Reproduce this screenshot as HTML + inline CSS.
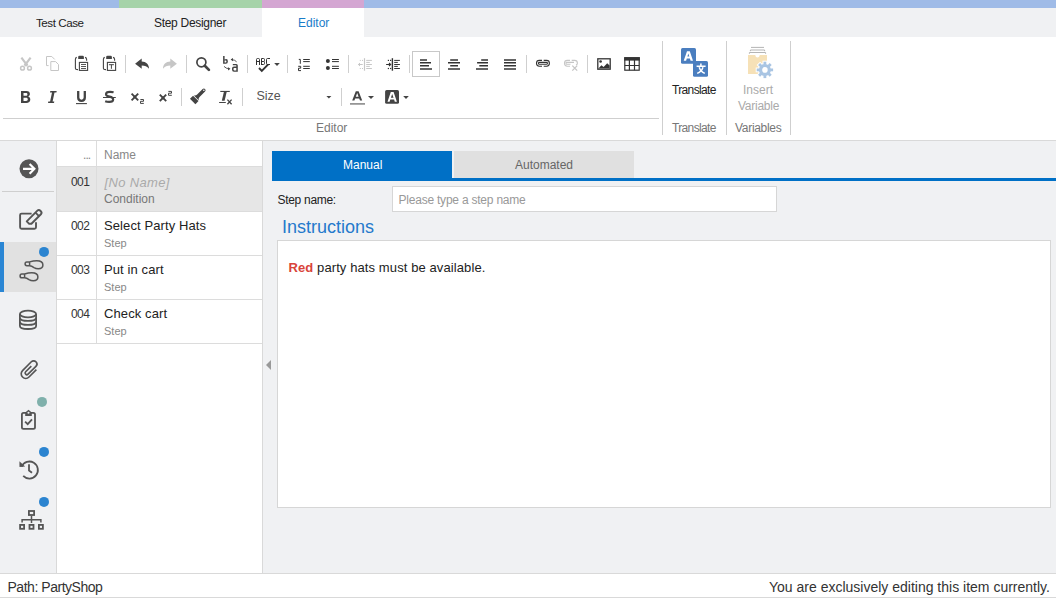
<!DOCTYPE html>
<html><head><meta charset="utf-8">
<style>
*{box-sizing:border-box;margin:0;padding:0}
html,body{width:1056px;height:599px;overflow:hidden;background:#fff;font-family:"Liberation Sans",sans-serif;color:#333}
.a{position:absolute}
.t{position:absolute;white-space:nowrap;line-height:1}
svg{position:absolute;overflow:visible}
</style></head><body>
<!-- color strip -->
<div class="a" style="left:0;top:0;width:119px;height:8px;background:#9fbbe7"></div>
<div class="a" style="left:119px;top:0;width:143px;height:8px;background:#a6d3a9"></div>
<div class="a" style="left:262px;top:0;width:102px;height:8px;background:#d4a6d2"></div>
<div class="a" style="left:364px;top:0;width:692px;height:8px;background:#9fbbe7"></div>
<!-- tab row -->
<div class="a" style="left:0;top:8px;width:1056px;height:29px;background:#f0f1f3"></div>
<div class="a" style="left:262px;top:8px;width:102px;height:29px;background:#fff"></div>
<div id="tTC" class="t" style="left:36px;top:16.8px;font-size:11.6px;letter-spacing:-0.45px;color:#222">Test Case</div>
<div id="tSD" class="t" style="left:154px;top:17px;font-size:12px;letter-spacing:-0.3px;color:#222">Step Designer</div>
<div id="tED" class="t" style="left:298px;top:16.5px;font-size:12px;color:#1a7cc9">Editor</div>

<svg style="left:0;top:0" width="1056" height="140" viewBox="0 0 1056 140">
<g fill="none" stroke="#cfcfcf" stroke-width="1">
<path d="M125.5 55V73M186.5 55V73M247.5 55V73M287.5 55V73M348.5 55V73M409.5 55V73M526.5 55V73M587.5 55V73"/>
<path d="M181.5 88V106M242.5 88V106M341.5 88V106"/>
<path d="M3 118.5H659"/>
<path d="M662.5 41V135M726.5 41V135M790.5 41V135"/>
</g>
<!-- cut -->
<g stroke="#c6c6c6" fill="none">
<path d="M21.4 57.6L27.4 65.6M30.6 57.6L24.6 65.6" stroke-width="2.2"/>
<path d="M26 61.6L28.2 64.6L26 66.8L23.8 64.6Z" fill="#c6c6c6" stroke="none"/>
<circle cx="22.5" cy="68.2" r="1.9" stroke-width="1.5"/>
<circle cx="29.5" cy="68.2" r="1.9" stroke-width="1.5"/>
</g>
<!-- copy -->
<g stroke="#c6c6c6" fill="none" stroke-width="1">
<path d="M48.6 65.6H46.5V56.5H51.8L54.7 59.4"/>
<path d="M50.8 61.6H55.6L58.5 64.5V70.5H50.8Z"/>
</g>
<!-- paste -->
<g fill="none" stroke="#444" stroke-width="1.1">
<path d="M76.8 57.4Q75.4 57.6 75.4 59.2V68.2Q75.4 69.6 78 69.6"/>
<path d="M85 57.4Q86.6 57.6 86.6 59.2V60.8"/>
<rect x="79.4" y="62.4" width="8.2" height="8" />
<path d="M81 64.5H86M81 66.5H86M81 68.5H86" stroke-width="0.9"/>
<path d="M104.8 57.4Q103.4 57.6 103.4 59.2V68.2Q103.4 69.6 106 69.6"/>
<path d="M113 57.4Q114.6 57.6 114.6 59.2V60.8"/>
<rect x="107.4" y="62.4" width="8.2" height="8" />
<path d="M108.9 64.7H113.9M111.4 64.7V68.8" stroke-width="1"/>
</g>
<g fill="#444">
<path d="M78.2 58.9V57Q78.2 55.7 79.5 55.7H82.6Q83.9 55.7 83.9 57V58.9Z"/>
<path d="M106.2 58.9V57Q106.2 55.7 107.5 55.7H110.6Q111.9 55.7 111.9 57V58.9Z"/>
</g>
<!-- undo / redo -->
<path fill="#444" d="M135.1 63.7L141.7 58.6V61.6C146.2 61.8 148.9 64.2 149 68.8C147.2 66.3 145 65.6 141.7 65.6V68.8Z"/>
<path fill="#c6c6c6" d="M176.9 63.7L170.3 58.6V61.6C165.8 61.8 163.1 64.2 163 68.8C164.8 66.3 167 65.6 170.3 65.6V68.8Z"/>
<!-- find -->
<g fill="none" stroke="#444">
<circle cx="201.4" cy="62.3" r="4.5" stroke-width="1.7"/>
<path d="M204.8 65.8L208.9 69.9" stroke-width="2.7" stroke-linecap="round"/>
</g>
<!-- replace -->
<g fill="#444">
<path fill-rule="evenodd" d="M223.1 56H224.6V59.6Q225.3 59.1 226.2 59.1Q227.9 59.1 227.9 61.4Q227.9 63.8 225.8 63.8H223.1ZM224.6 60.5V62.6H225.7Q226.4 62.6 226.4 61.5Q226.4 60.5 225.7 60.5Z"/>
<path fill-rule="evenodd" d="M232.8 64H236.3Q237.8 64 237.8 65.5V71.7H234Q232 71.7 232 69.5V68.4Q232 66.6 234 66.6H236.3V65.6Q236.3 65.3 236 65.3H232.8ZM234.2 67.9Q233.5 67.9 233.5 68.6V69.6Q233.5 70.4 234.2 70.4H236.3V67.9Z"/>
</g>
<g fill="none" stroke="#444" stroke-width="0.9">
<path d="M236.6 61.8Q235 59.8 231.6 59.6"/>
<path d="M224 66.4Q225.8 68.6 229.4 68.8"/>
</g>
<g fill="#444">
<path d="M230.6 59.6L233 58V61.2Z"/>
<path d="M230.4 68.8L228 67.2V70.4Z"/>
</g>
<!-- spell -->
<g fill="none" stroke="#333" stroke-width="1">
<path d="M256.5 65V59.5Q256.5 58.5 257.5 58.5H258.5Q259.5 58.5 259.5 59.5V65M256.5 61.5H259.5"/>
<path d="M261.5 65V58.5H263.5Q264.5 58.5 264.5 59.5V60.5Q264.5 61.5 263.5 61.5H261.5M263.5 61.5Q264.5 61.5 264.5 62.5V63.5Q264.5 64.5 263.5 64.5H261.5"/>
<path d="M270 58.5H267.5Q266.5 58.5 266.5 59.5V63.5Q266.5 64.5 267.5 64.5H270"/>
</g>
<path d="M259 68L261.8 70.9L268.2 64.4" fill="none" stroke="#333" stroke-width="1.9"/>
<path d="M274.2 63H279.8L277 65.9Z" fill="#444"/>
<!-- numbered list -->
<g fill="none" stroke="#333" stroke-width="1">
<path d="M303.2 59.5H309.8M303.2 61.6H309.8M303.2 66.3H309.8M303.2 68.5H309.8"/>
<path d="M298.8 59.4H300.3V63.8"/>
<path d="M298.2 66.3H300.7V68.2H298.5V70.6H301"/>
<path d="M332 59.5H338.9M332 61.6H338.9M332 66.3H338.9M332 68.5H338.9"/>
</g>
<circle cx="327.9" cy="61" r="2" fill="#333"/>
<circle cx="327.9" cy="67.9" r="2" fill="#333"/>
<!-- outdent -->
<g fill="none" stroke="#c6c6c6" stroke-width="1">
<path d="M364.5 58.2V70.7" stroke-width="1.2"/>
<path d="M366.2 60.4H371.9M366.2 62.4H369.8M366.2 64.5H371.9M366.2 66.4H369.8M366.2 68.5H371.9"/>
<path d="M358.4 64.5H362.7M360 63L358.4 64.5L360 66"/>
</g>
<g fill="#c6c6c6"><rect x="359.8" y="59.9" width="1" height="1"/><rect x="362" y="59.9" width="1" height="1"/><rect x="359.8" y="68" width="1" height="1"/><rect x="362" y="68" width="1" height="1"/></g>
<!-- indent -->
<g fill="none" stroke="#333" stroke-width="1">
<path d="M392.4 58.2V70.7" stroke-width="1.4"/>
<path d="M394.2 60.4H399.9M394.2 62.4H397.8M394.2 64.5H399.9M394.2 66.4H397.8M394.2 68.5H399.9"/>
<path d="M386.1 64.5H390.4M389 63L390.6 64.5L389 66" stroke-width="1.2"/>
</g>
<g fill="#333"><rect x="387.8" y="59.8" width="1.2" height="1.2"/><rect x="390" y="59.8" width="1.2" height="1.2"/><rect x="387.8" y="67.9" width="1.2" height="1.2"/><rect x="390" y="67.9" width="1.2" height="1.2"/></g>
<!-- align -->
<rect x="412.5" y="51.5" width="27" height="25" fill="none" stroke="#c8c8c8" stroke-width="1"/>
<g fill="none" stroke="#333" stroke-width="1.5">
<path d="M420 59.9H427M420 62.8H431M420 65.8H429M420 68.9H432"/>
<path d="M450.2 59.9H458M448 62.8H460M450.2 65.8H458M448 68.9H460"/>
<path d="M481.2 59.9H488M477.1 62.8H488M479.3 65.8H488M476 68.9H488"/>
<path d="M504 59.9H516M504 62.8H516M504 65.8H516M504 68.9H516"/>
</g>
<!-- link -->
<g fill="none" stroke="#333" stroke-width="1.1">
<path d="M542 60.4H539.3Q536.5 60.4 536.5 63.3Q536.5 66.2 539.3 66.2H542"/>
<path d="M543.7 60.4H546.6Q549.4 60.4 549.4 63.3Q549.4 66.2 546.6 66.2H543.7"/>
<rect x="538.5" y="62.4" width="8.9" height="1.9" rx="0.9"/>
</g>
<g fill="none" stroke="#c6c6c6" stroke-width="1.1">
<path d="M570 60.4H567.3Q564.5 60.4 564.5 63.3Q564.5 66.2 567.3 66.2H570"/>
<path d="M571.7 60.4H574.6Q577.4 60.4 577.4 63.3Q577.4 64.6 576 65"/>
<path d="M570.5 64.3H566.5Q566 64.3 566 63.3Q566 62.4 566.5 62.4H574"/>
<path d="M572.3 65.6L577.2 70.6M577.2 65.6L572.3 70.6" stroke-width="1.3"/>
</g>
<!-- image -->
<rect x="597.8" y="58.8" width="12.4" height="10.4" fill="none" stroke="#333" stroke-width="1.3"/>
<circle cx="600.6" cy="61.5" r="1.3" fill="#333"/>
<path d="M598.5 68.6L601.4 65.2L603.6 67L607.2 63.3L609.6 65.6V68.6Z" fill="#333"/>
<!-- table -->
<rect x="624.8" y="57.8" width="14.4" height="12.4" fill="none" stroke="#333" stroke-width="1.2"/>
<rect x="624.2" y="57.2" width="15.6" height="3.4" fill="#333"/>
<path d="M629.4 60V70.2M634.5 60V70.2M624.8 65.5H639.2" stroke="#333" stroke-width="1.2"/>

<!-- row 2 -->
<path fill="#444" fill-rule="evenodd" d="M21 91H26.4C28.8 91 29.9 92.2 29.9 93.9C29.9 95.1 29.2 96 28.1 96.5C29.5 96.9 30.3 98 30.3 99.5C30.3 101.7 28.8 103 26.3 103H21ZM23.5 93V95.8H25.9C26.9 95.8 27.4 95.2 27.4 94.4C27.4 93.5 26.9 93 25.9 93ZM23.5 97.7V101H26.1C27.2 101 27.8 100.4 27.8 99.3C27.8 98.3 27.2 97.7 26.1 97.7Z"/>
<path fill="#444" d="M50.3 91H56.7L56.4 92.4H54.5L52.6 101.6H54.3L54 103H48L48.3 101.6H50.1L52 92.4H50Z"/>
<path fill="none" stroke="#444" stroke-width="2.3" d="M78.2 90.9V97.6Q78.2 100.9 81.5 100.9Q84.8 100.9 84.8 97.6V90.9"/>
<path stroke="#444" stroke-width="1.1" d="M76 103.6H86.9"/>
<path fill="none" stroke="#444" stroke-width="2.1" d="M113.6 92.4Q112.4 91.9 110 91.9Q106 91.9 106 94.2Q106 96 109.6 96.6Q113.2 97.3 113.2 99.4Q113.2 101.9 109.2 101.9Q106.8 101.9 105.2 101.2"/>
<path stroke="#444" stroke-width="1" d="M103 97.5H115.8"/>
<g stroke="#444" stroke-width="1.9">
<path d="M131.6 93.6L138.2 100.3M138.2 93.6L131.6 100.3"/>
<path d="M159.8 94.6L166.2 101.2M166.2 94.6L159.8 101.2"/>
</g>
<rect x="133.6" y="95.6" width="2.6" height="2.6" fill="#444"/>
<rect x="161.7" y="96.6" width="2.6" height="2.6" fill="#444"/>
<g fill="none" stroke="#444" stroke-width="1">
<path d="M140.4 99.5H143.5V101.3H140.5V103.4H143.8"/>
<path d="M168.4 91.4H171.5V93.2H168.5V95.3H171.8"/>
</g>
<!-- brush -->
<g transform="translate(198.9 95.25) rotate(45)" fill="#444">
<rect x="-3.85" y="4.4" width="7.7" height="4.4"/>
<path d="M-3.4 3.7H3.4Q1.7 2.6 1.7 0.8V-7A1.7 1.7 0 0 0 -1.7 -7V0.8Q-1.7 2.6 -3.4 3.7Z"/>
<circle cx="0" cy="-7" r="0.75" fill="#fff"/>
</g>
<!-- Tx -->
<g fill="#444">
<path d="M220.3 90.9H229.8V92H220.3Z"/>
<path d="M224 91.5H226.8L224.6 100.8H221.8Z"/>
<path d="M219.1 102H225.8V103H219.1Z"/>
</g>
<path d="M227.4 99.6L231.6 104.2M231.6 99.6L227.4 104.2" stroke="#444" stroke-width="1.3"/>
<!-- size dropdown arrow -->
<path d="M326.4 96H331.4L328.9 98.6Z" fill="#444"/>
<!-- font color -->
<path fill="#444" fill-rule="evenodd" d="M355.8 91.2H358.6L362.2 100.6H360L359.2 98.4H355.2L354.4 100.6H352.2ZM355.8 96.7H358.6L357.2 92.9Z"/>
<rect x="350" y="103.1" width="15" height="1.6" fill="#8a8a8a"/>
<path d="M368 96H374L371 98.9Z" fill="#444"/>
<rect x="385.1" y="90" width="13.9" height="13.8" rx="1.6" fill="#444"/>
<path fill="#fff" fill-rule="evenodd" d="M390.8 92.1H393.6L396.9 101.7H394.8L394.1 99.5H390.3L389.6 101.7H387.5ZM390.9 97.8H393.5L392.2 94Z"/>
<path d="M403.2 96H408.8L406 98.9Z" fill="#444"/>
</svg>

<div id="tSize" class="t" style="left:256.5px;top:90px;font-size:12.5px;color:#555">Size</div>
<div id="gEd" class="t" style="left:316px;top:122px;font-size:12px;color:#777">Editor</div>
<div id="gTr" class="t" style="left:672px;top:122px;font-size:12px;letter-spacing:-0.65px;color:#777">Translate</div>
<div id="gVa" class="t" style="left:735px;top:122px;font-size:12px;letter-spacing:-0.3px;color:#777">Variables</div>
<div id="bTr" class="t" style="left:672px;top:84px;font-size:12px;letter-spacing:-0.65px;color:#222">Translate</div>
<div id="bIn" class="t" style="left:743px;top:84px;font-size:12px;color:#aaa">Insert</div>
<div id="bVa" class="t" style="left:738px;top:100px;font-size:12px;letter-spacing:-0.25px;color:#aaa">Variable</div>

<!-- toolbar bottom -->
<div class="a" style="left:0;top:140px;width:1056px;height:1px;background:#d9d9d9"></div>

<!-- sidebar -->
<div class="a" style="left:0;top:141px;width:56px;height:432px;background:#f0f1f3"></div>
<div class="a" style="left:56px;top:141px;width:1px;height:432px;background:#d9d9d9"></div>
<div class="a" style="left:0;top:242px;width:56px;height:50px;background:#e1e1e1"></div>
<div class="a" style="left:0;top:242px;width:4px;height:50px;background:#2a86d4"></div>
<div class="a" style="left:2px;top:191px;width:52px;height:1px;background:#cfcfcf"></div>

<!-- list -->
<div class="a" style="left:57px;top:141px;width:205px;height:432px;background:#fff"></div>
<div class="a" style="left:262px;top:141px;width:1px;height:432px;background:#d9d9d9"></div>
<div class="a" style="left:57px;top:167px;width:205px;height:44px;background:#e6e6e6"></div>
<div class="a" style="left:57px;top:166px;width:205px;height:1px;background:#dcdcdc"></div>
<div class="a" style="left:57px;top:211px;width:205px;height:1px;background:#dcdcdc"></div>
<div class="a" style="left:57px;top:255px;width:205px;height:1px;background:#dcdcdc"></div>
<div class="a" style="left:57px;top:299px;width:205px;height:1px;background:#dcdcdc"></div>
<div class="a" style="left:57px;top:343px;width:205px;height:1px;background:#dcdcdc"></div>
<div class="a" style="left:96px;top:141px;width:1px;height:202px;background:#dcdcdc"></div>

<div id="lDots" class="t" style="left:83px;top:149px;font-size:12px;letter-spacing:-0.9px;color:#888">...</div>
<div id="lName" class="t" style="left:104px;top:148.5px;font-size:12px;color:#888">Name</div>
<div id="n1" class="t" style="letter-spacing:-0.6px;left:71px;top:176px;font-size:12px;color:#333">001</div>
<div id="n2" class="t" style="letter-spacing:-0.6px;left:71px;top:220px;font-size:12px;color:#333">002</div>
<div id="n3" class="t" style="letter-spacing:-0.6px;left:71px;top:264px;font-size:12px;color:#333">003</div>
<div id="n4" class="t" style="letter-spacing:-0.6px;left:71px;top:308px;font-size:12px;color:#333">004</div>
<div id="r1a" class="t" style="left:104.5px;top:176px;font-size:13px;letter-spacing:0.35px;color:#aaa;font-style:italic">[No Name]</div>
<div id="r1b" class="t" style="left:104px;top:193px;font-size:12px;color:#777">Condition</div>
<div id="r2a" class="t" style="left:104px;top:219px;font-size:13px;letter-spacing:0.1px;color:#222">Select Party Hats</div>
<div id="r2b" class="t" style="left:104px;top:238px;font-size:11px;color:#888">Step</div>
<div id="r3a" class="t" style="left:104px;top:263px;font-size:13px;letter-spacing:0.1px;color:#222">Put in cart</div>
<div id="r3b" class="t" style="left:104px;top:282px;font-size:11px;color:#888">Step</div>
<div id="r4a" class="t" style="left:104px;top:307px;font-size:13px;letter-spacing:0.1px;color:#222">Check cart</div>
<div id="r4b" class="t" style="left:104px;top:326px;font-size:11px;color:#888">Step</div>

<!-- main -->
<div class="a" style="left:263px;top:141px;width:793px;height:432px;background:#f0f1f3"></div>
<div class="a" style="left:272px;top:151px;width:180px;height:27px;background:#0070c6"></div>
<div class="a" style="left:454px;top:151px;width:180px;height:27px;background:#e0e0e0"></div>
<div class="a" style="left:272px;top:178px;width:784px;height:3px;background:#0070c6"></div>
<div id="mMan" class="t" style="left:343px;top:159px;font-size:12px;color:#fff">Manual</div>
<div id="mAut" class="t" style="left:515px;top:159px;font-size:12px;color:#666">Automated</div>
<div id="mSN" class="t" style="left:277.5px;top:194px;font-size:12px;letter-spacing:-0.3px;color:#222">Step name:</div>
<div class="a" style="left:392px;top:186px;width:385px;height:26px;background:#fff;border:1px solid #d6d6d6"></div>
<div id="mPH" class="t" style="left:398.5px;top:194px;font-size:12px;letter-spacing:-0.22px;color:#999">Please type a step name</div>
<div id="mIns" class="t" style="left:282px;top:218px;font-size:18px;color:#2479cc">Instructions</div>
<div class="a" style="left:277px;top:240px;width:774px;height:268px;background:#fff;border:1px solid #d6d6d6"></div>
<div id="mRed" class="t" style="left:288.5px;top:261px;font-size:13px;letter-spacing:0.1px;color:#222"><b style="color:#d9443a">Red</b> party hats must be available.</div>
<svg style="left:266px;top:360px" width="6" height="10"><path d="M5 0 L0 5 L5 10 Z" fill="#999"/></svg>

<!-- status bar -->
<div class="a" style="left:0;top:573px;width:1056px;height:1px;background:#d9d9d9"></div>
<div class="a" style="left:0;top:597px;width:1056px;height:1px;background:#d9d9d9"></div>
<div id="sPath" class="t" style="left:7.5px;top:580px;font-size:14px;letter-spacing:-0.47px;color:#333">Path: PartyShop</div>
<div id="sEx" class="t" style="left:769px;top:580px;font-size:14px;color:#333">You are exclusively editing this item currently.</div>

<svg style="left:0;top:0" width="1056" height="599" viewBox="0 0 1056 599">
<!-- translate icon -->
<rect x="681" y="48" width="15" height="15.7" rx="1.5" fill="#4a7ebf"/>
<rect x="693" y="61" width="15" height="15.7" rx="1.5" fill="#4a7ebf"/>
<path fill="#fff" fill-rule="evenodd" d="M687 51.3H689.8L693 60.7H690.6L689.9 58.5H686.8L686.1 60.7H683.7ZM687.4 56.6H689.3L688.35 53.6Z"/>
<g stroke="#fff" stroke-width="1.5" fill="none">
<path d="M700.9 63.6V65.6M696.6 66.3H705.6M699.2 67.2Q700.6 71.6 704.8 73.4M703 67.2Q701.6 71.6 697.2 73.4"/>
</g>
<!-- insert variable icon -->
<path fill="#f6e1b7" d="M748 55H755.2Q755.6 57.6 757.5 57.6Q759.4 57.6 759.8 55H767V64.5L760 64.5V74H748Z"/>
<g stroke="#b5b5b5" stroke-width="1" fill="none">
<path d="M751 47.4H764"/>
<path d="M750.4 51.2V50H764.6V51.2"/>
<path d="M749.4 53.8V52.5H765.6V53.8"/>
</g>
<g transform="translate(764.9 69.9)" fill="#fff" stroke="#fff" stroke-width="2"><circle r="6"/>
<rect x="-1.4" y="-8.2" width="2.8" height="3"/><rect x="-1.4" y="5.2" width="2.8" height="3"/><rect x="-8.2" y="-1.4" width="3" height="2.8"/><rect x="5.2" y="-1.4" width="3" height="2.8"/>
<g transform="rotate(45)"><rect x="-1.4" y="-8.2" width="2.8" height="3"/><rect x="-1.4" y="5.2" width="2.8" height="3"/><rect x="-8.2" y="-1.4" width="3" height="2.8"/><rect x="5.2" y="-1.4" width="3" height="2.8"/></g></g>
<g transform="translate(764.9 69.9)" fill="#a9c5e3"><circle r="6"/>
<rect x="-1.4" y="-8.2" width="2.8" height="3"/><rect x="-1.4" y="5.2" width="2.8" height="3"/><rect x="-8.2" y="-1.4" width="3" height="2.8"/><rect x="5.2" y="-1.4" width="3" height="2.8"/>
<g transform="rotate(45)"><rect x="-1.4" y="-8.2" width="2.8" height="3"/><rect x="-1.4" y="5.2" width="2.8" height="3"/><rect x="-8.2" y="-1.4" width="3" height="2.8"/><rect x="5.2" y="-1.4" width="3" height="2.8"/></g>
<circle r="2.8" fill="#fff"/>
</g>

<!-- sidebar -->
<circle cx="29" cy="168.8" r="9.5" fill="#555"/>
<path d="M23 168.8H34M29.6 163.9L34.4 168.8L29.6 173.7" fill="none" stroke="#fff" stroke-width="2.2"/>

<g fill="none" stroke="#555" stroke-width="1.9" stroke-linejoin="round">
<path d="M31.6 213.6H21.6Q20.1 213.6 20.1 215.1V227.2Q20.1 228.7 21.6 228.7H34.5Q36 228.7 36 227.2V222.2"/>
<g transform="translate(34.75 216.85) rotate(45)">
<path d="M-2.5 -6.2Q-2.5 -8.3 0 -8.3Q2.5 -8.3 2.5 -6.2V7.2L1 8.85H-2.5Z"/>
<path d="M-2.5 -3.5H2.5"/>
</g>
</g>

<circle cx="44" cy="251.9" r="5" fill="#2b84d0"/>
<g fill="none" stroke="#555" stroke-width="1.5">
<path d="M29.6 261.9H26.8Q25.1 261.9 25.1 263.8Q25.1 265.7 26.8 265.7H29.6Q31.6 265.9 34 267.6Q35.8 268.7 38.3 268.7Q42.9 268.7 42.9 265Q42.9 260.7 36.8 260.7Q33.4 260.7 29.6 261.9ZM29.6 261.9V265.7"/>
<path d="M29.6 261.9H26.8Q25.1 261.9 25.1 263.8Q25.1 265.7 26.8 265.7H29.6Q31.6 265.9 34 267.6Q35.8 268.7 38.3 268.7Q42.9 268.7 42.9 265Q42.9 260.7 36.8 260.7Q33.4 260.7 29.6 261.9ZM29.6 261.9V265.7" transform="translate(-5 12.1)"/>
</g>

<g fill="none" stroke="#555" stroke-width="1.8">
<ellipse cx="28" cy="314" rx="8.1" ry="3.3"/>
<path d="M19.9 314V326Q19.9 329 28 329Q36.1 329 36.1 326V314"/>
<path d="M19.9 318Q20.5 320.9 28 320.9Q35.5 320.9 36.1 318"/>
<path d="M19.9 322Q20.5 324.9 28 324.9Q35.5 324.9 36.1 322"/>
</g>

<g transform="translate(29 370) rotate(45) scale(1.1)" fill="none" stroke="#555" stroke-width="1.5">
<path d="M4.5 -5V4.5A4.15 4.15 0 0 1 -3.8 4.5V-6.8A2.95 2.95 0 0 1 2.1 -6.8V3.3A1.55 1.55 0 0 1 -1 3.3V-4"/>
</g>

<circle cx="42" cy="401.9" r="5" fill="#7fb0ab"/>
<g fill="none" stroke="#555" stroke-width="1.8">
<rect x="21.9" y="412.9" width="13.1" height="15.9" rx="1.6"/>
<path d="M25.1 421.6L27.7 424.2L32 419.3"/>
</g>
<path fill="#555" d="M25.2 415.9V412.6L28.5 409.8L31.8 412.6V415.9Z"/><circle cx="28.5" cy="412.7" r="1.05" fill="#f0f1f3"/>

<circle cx="44" cy="451.9" r="5" fill="#2b84d0"/>
<g fill="none" stroke="#555" stroke-width="1.8">
<path d="M21.6 466.6A8.5 8.5 0 1 1 23.2 475.9"/>
<path d="M29 464.3V470.6L32 472.8"/>
</g>
<path fill="#555" d="M19.4 461.2L19.5 466.9L25.1 466.6Z"/>

<circle cx="44" cy="501.9" r="5" fill="#2b84d0"/>
<g fill="none" stroke="#555" stroke-width="1.8">
<rect x="28.9" y="511" width="5.2" height="4"/>
<rect x="20.1" y="524.9" width="4" height="3.9"/>
<rect x="29.5" y="524.9" width="4" height="3.9"/>
<rect x="38.9" y="524.9" width="4" height="3.9"/>
</g>
<g fill="none" stroke="#555" stroke-width="1.5">
<path d="M31.5 515.7V523M22.1 522.5V519.8H40.9V522.5"/>
</g>
</svg>

</body></html>
